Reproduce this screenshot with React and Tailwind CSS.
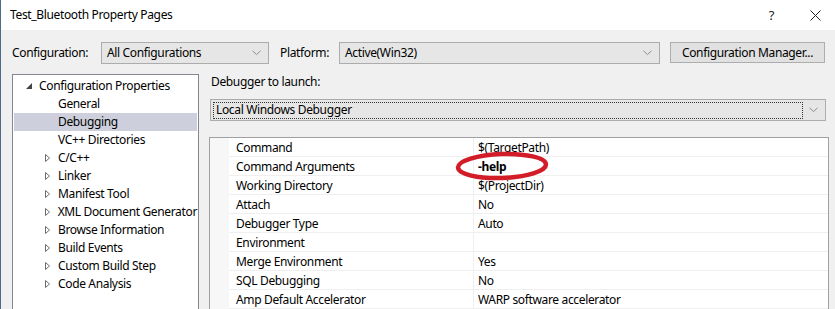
import React from "react";

const FONT = { fontFamily: '"Noto Sans", "Open Sans", sans-serif' };

const TREE = [
  { label: "Configuration Properties", level: 0, open: true },
  { label: "General", level: 1 },
  { label: "Debugging", level: 1, selected: true },
  { label: "VC++ Directories", level: 1 },
  { label: "C/C++", level: 1, closed: true },
  { label: "Linker", level: 1, closed: true },
  { label: "Manifest Tool", level: 1, closed: true },
  { label: "XML Document Generator", level: 1, closed: true },
  { label: "Browse Information", level: 1, closed: true },
  { label: "Build Events", level: 1, closed: true },
  { label: "Custom Build Step", level: 1, closed: true },
  { label: "Code Analysis", level: 1, closed: true },
];

const PROPS = [
  { name: "Command", value: "$(TargetPath)" },
  { name: "Command Arguments", value: "-help", bold: true, circled: true },
  { name: "Working Directory", value: "$(ProjectDir)" },
  { name: "Attach", value: "No" },
  { name: "Debugger Type", value: "Auto" },
  { name: "Environment", value: "" },
  { name: "Merge Environment", value: "Yes" },
  { name: "SQL Debugging", value: "No" },
  { name: "Amp Default Accelerator", value: "WARP software accelerator" },
];

function Chevron() {
  return (
    <svg width="9" height="6" viewBox="0 0 9 6" className="shrink-0">
      <polyline points="0.5,0.8 4.5,4.6 8.5,0.8" fill="none" stroke="#8a8a8a" strokeWidth="1" />
    </svg>
  );
}

function Combo({ width, text, focus }) {
  return (
    <div
      className={`h-[22px] ${width} flex items-center bg-[#e6e6e6] border border-[#acacac] pl-[2px] pr-[7px]`}
    >
      <div
        className={`flex-1 h-[17px] flex items-center pl-[2px] ${
          focus ? "border border-dotted border-[#333]" : "border border-transparent"
        }`}
      >
        {text}
      </div>
      <div className="ml-[6px]">
        <Chevron />
      </div>
    </div>
  );
}

function TreeRow({ item }) {
  return (
    <div
      className={`h-[18px] flex items-center ${item.selected ? "bg-[#cdd0dc]" : ""}`}
    >
      {item.level === 0 ? (
        <div className="w-[25px] flex justify-end pr-[7px]">
          <svg width="6" height="6" viewBox="0 0 6 6">
            <polygon points="6,0 6,6 0,6" fill="#444" />
          </svg>
        </div>
      ) : (
        <div className="w-[44px] flex justify-end pr-[8px]">
          {item.closed && (
            <svg width="5" height="8" viewBox="0 0 5 8">
              <polygon points="0.5,0.5 4.5,4 0.5,7.5" fill="none" stroke="#6d6d6d" strokeWidth="1" />
            </svg>
          )}
        </div>
      )}
      <span className="whitespace-nowrap">{item.label}</span>
    </div>
  );
}

function PropRow({ p }) {
  return (
    <div className="h-[19px] flex">
      <div className="w-[19px] shrink-0 bg-[#f7f7f7]" />
      <div className="w-[245px] shrink-0 flex items-center pl-[7px] pt-[1px] border-b border-[#efefef] border-r">
        {p.name}
      </div>
      <div className="relative flex-1 flex items-center pl-[4px] pt-[1px] border-b border-[#efefef]">
        <span className={p.bold ? "font-bold" : ""}>{p.value}</span>
        {p.circled && (
          <svg
            className="absolute left-[-19px] top-[-7px] pointer-events-none"
            width="96"
            height="32"
            viewBox="0 0 96 32"
          >
            <ellipse
              cx="47"
              cy="16"
              rx="44"
              ry="12"
              fill="none"
              stroke="#d21c28"
              strokeWidth="4.5"
              transform="rotate(-2 47 16)"
            />
          </svg>
        )}
      </div>
    </div>
  );
}

export default function App() {
  return (
    <div
      className="w-[835px] h-[309px] overflow-hidden bg-[#f0f0f0] border-l border-[#50698a] text-[12px] tracking-[-0.35px] text-black leading-none"
      style={FONT}
    >
      {/* Title bar */}
      <div className="h-[30px] bg-white flex items-center pl-[9px]">
        <span>Test_Bluetooth Property Pages</span>
        <span className="ml-auto text-[13px] text-[#222]">?</span>
        <svg className="ml-[36px] mr-[14px]" width="11" height="11" viewBox="0 0 11 11">
          <path d="M0.5 0.5 L10.5 10.5 M10.5 0.5 L0.5 10.5" stroke="#222" strokeWidth="1" />
        </svg>
      </div>

      {/* Configuration row */}
      <div className="mt-[12px] h-[21px] flex items-center pl-[11px]">
        <div className="w-[89px]">Configuration:</div>
        <Combo width="w-[168px]" text="All Configurations" />
        <div className="ml-[11px] w-[59px]">Platform:</div>
        <Combo width="w-[321px]" text="Active(Win32)" />
        <button className="ml-[10px] w-[155px] h-[21px] bg-[#e1e1e1] border border-[#adadad] flex items-center justify-center">
          Configuration Manager...
        </button>
      </div>

      {/* Main area */}
      <div className="mt-[11px] flex">
        <div className="ml-[11px] w-[187px] h-[240px] bg-white border border-[#828790] pt-[2px] pl-[1px] pr-[1px]">
          {TREE.map((t) => (
            <TreeRow key={t.label} item={t} />
          ))}
        </div>

        <div className="ml-[10px] w-[620px]">
          <div className="h-[16px] flex items-center pl-[2px]">Debugger to launch:</div>
          <div className="mt-[9px] ml-[1px]">
            <Combo width="w-[616px]" text="Local Windows Debugger" focus />
          </div>
          <div className="mt-[16px] bg-white border border-[#a0a0a0] h-[200px]">
            {PROPS.map((p) => (
              <PropRow key={p.name} p={p} />
            ))}
          </div>
        </div>
      </div>
    </div>
  );
}
